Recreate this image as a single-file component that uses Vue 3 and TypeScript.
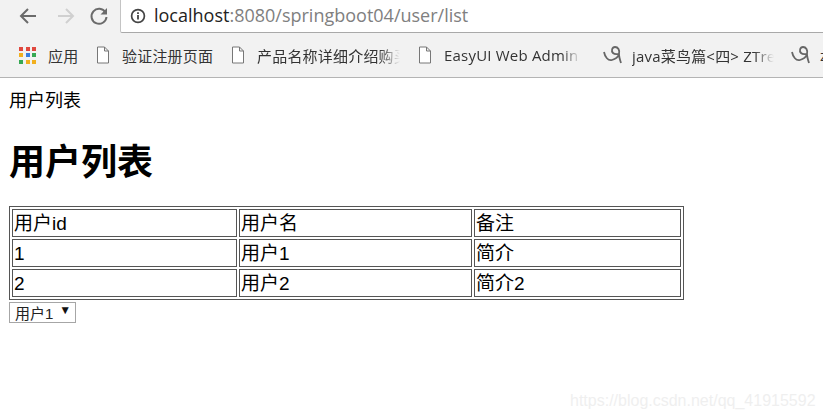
<script setup lang="ts">
interface Bookmark { label: string; icon: 'apps' | 'doc' | 'bird'; width: number; labelWidth?: number }
const bookmarks: Bookmark[] = [
  { label: '应用', icon: 'apps', width: 77 },
  { label: '验证注册页面', icon: 'doc', width: 135 },
  { label: '产品名称详细介绍购买', icon: 'doc', width: 187, labelWidth: 143 },
  { label: 'EasyUI Web Admin', icon: 'doc', width: 185, labelWidth: 137 },
  { label: 'java菜鸟篇<四> ZTree', icon: 'bird', width: 188, labelWidth: 142 },
  { label: 'z', icon: 'bird', width: 40 },
]
const rows: string[][] = [
  ['用户id', '用户名', '备注'],
  ['1', '用户1', '简介'],
  ['2', '用户2', '简介2'],
]
const appColors = ['#e0483e', '#e0483e', '#e0483e', '#f2b01e', '#3a7fe0', '#37a853', '#37a853', '#f2b01e', '#f2b01e']
</script>

<template>
  <div class="page">
    <header class="chrome">
      <div class="toolbar">
        <div class="nav">
          <svg class="nav-icon" viewBox="0 0 20 20"><path d="M18 10H3.500M10 3l-7 7 7 7" fill="none" stroke="#6b6b6b" stroke-width="2"/></svg>
          <svg class="nav-icon" viewBox="0 0 20 20"><path d="M2 10h14.500M10 3l7 7-7 7" fill="none" stroke="#d0d0d0" stroke-width="2"/></svg>
          <svg class="nav-icon" viewBox="0 0 20 20"><path d="M16.500 6.500A7.500 7.500 0 1 0 17.500 11" fill="none" stroke="#6b6b6b" stroke-width="2"/><path d="M18 2v6.500h-6.500z" fill="#6b6b6b"/></svg>
        </div>
        <div class="address">
          <svg class="info" viewBox="0 0 16 16"><circle cx="8" cy="8" r="6.400" fill="none" stroke="#444" stroke-width="1.700"/><path d="M8 7v4.500M8 4.300v1.600" stroke="#444" stroke-width="1.800"/></svg>
          <span class="url"><span class="host">localhost</span>:8080/springboot04/user/list</span>
        </div>
      </div>
      <nav class="bookmarks">
        <div v-for="b in bookmarks" :key="b.label" class="bookmark" :style="{ width: b.width + 'px' }">
          <span v-if="b.icon === 'apps'" class="apps">
            <i v-for="(c, i) in appColors" :key="i" :style="{ background: c }"></i>
          </span>
          <svg v-else-if="b.icon === 'doc'" class="bm-icon" viewBox="0 0 14 18"><path d="M1.500 1h7l4 4v12h-11zM8.500 1v4h4" fill="#fff" stroke="#777" stroke-width="1"/></svg>
          <svg v-else class="bm-icon bird" viewBox="0 0 20 18"><path d="M1 6c1 5 4 9 8 8 4-1 6-3 7-6M16 8c1-4-1-7-4-7s-4 4-2 6 4 1 6 1c0 3 1 6 2 9" fill="none" stroke="#666" stroke-width="1.800"/></svg>
          <span
            class="bm-label"
            :class="{ fade: b.labelWidth }"
            :style="b.labelWidth ? { width: b.labelWidth + 'px', flex: 'none' } : undefined"
          >{{ b.label }}</span>
        </div>
      </nav>
    </header>
    <main class="content">
      <p class="crumb">用户列表</p>
      <h1 class="title">用户列表</h1>
      <table class="users">
        <tbody>
          <tr v-for="row in rows" :key="row[0]">
            <td class="c1">{{ row[0] }}</td>
            <td class="c2">{{ row[1] }}</td>
            <td class="c3">{{ row[2] }}</td>
          </tr>
        </tbody>
      </table>
      <div class="select"><span>用户1</span><span class="arrow">▼</span></div>
    </main>
    <div class="watermark">https://blog.csdn.net/qq_41915592</div>
  </div>
</template>

<style scoped>
.page {
  width: 823px;
  height: 420px;
  position: relative;
  overflow: hidden;
  background: #fff;
  color: #000;
  font-family: "Open Sans", "Noto Sans CJK SC", sans-serif;
}
.chrome {
  background: #f2f2f2;
  border-bottom: 1px solid #b4b4b4;
  height: 77px;
  box-sizing: content-box;
}
.toolbar {
  display: flex;
  height: 33px;
}
.nav {
  width: 120px;
  flex: none;
  display: grid;
  grid-template-columns: 38px 33px 20px;
  align-items: center;
  padding-left: 18px;
  padding-bottom: 1px;
  box-sizing: border-box;
}
.nav-icon {
  width: 20px;
  height: 20px;
  flex: none;
}
.address {
  flex: 1;
  background: #fff;
  border-left: 1px solid #c4c4c4;
  border-bottom: 1px solid #a9a9a9;
  border-bottom-left-radius: 2px;
  display: flex;
  align-items: center;
  padding-left: 9px;
  gap: 8px;
}
.info {
  width: 16px;
  height: 16px;
  flex: none;
}
.url {
  font-family: "Open Sans", sans-serif;
  font-size: 18px;
  color: #808080;
  white-space: nowrap;
  padding-bottom: 2px;
}
.host { color: #222; }
.bookmarks {
  display: flex;
  height: 44px;
  align-items: center;
  padding-left: 19px;
}
.bookmark {
  display: flex;
  align-items: center;
  flex: none;
  overflow: hidden;
  white-space: nowrap;
  font-size: 15px;
  letter-spacing: 0.2px;
  color: #333;
}
.apps {
  display: grid;
  grid-template-columns: repeat(3, 4px);
  gap: 2.500px;
  width: 17px;
  margin-right: 12px;
  flex: none;
}
.apps i { width: 4px; height: 4px; display: block; }
.bm-icon {
  width: 14px;
  height: 18px;
  margin-right: 12px;
  flex: none;
}
.bm-icon.bird {
  width: 20px;
  margin-right: 9px;
}
.bm-label {
  display: block;
  overflow: hidden;
  flex: 1;
}
.bm-label.fade {
  -webkit-mask-image: linear-gradient(to right, #000 86%, transparent 100%);
  mask-image: linear-gradient(to right, #000 86%, transparent 100%);
}
.content {
  padding: 0 9px;
  font-family: "Liberation Sans", "Noto Sans CJK SC", sans-serif;
}
.crumb {
  margin: 0;
  padding-top: 13px;
  font-size: 18px;
  line-height: 21px;
}
.title {
  margin: 30px 0 0;
  font-size: 36px;
  line-height: 42px;
  font-weight: 700;
}
.users {
  margin-top: 22px;
  width: 675px;
  border-collapse: separate;
  border-spacing: 2px;
  border: 1px solid #555;
  table-layout: fixed;
  font-size: 19px;
}
.users td {
  border: 1px solid #555;
  padding: 2px 1px 0;
  height: 28px;
  line-height: 24px;
  box-sizing: border-box;
  overflow: hidden;
  white-space: nowrap;
}
.c1 { width: 225px; }
.c2 { width: 233px; }
.select {
  width: 67px;
  height: 21px;
  margin-top: 2px;
  box-sizing: border-box;
  border: 1px solid #a6a6a6;
  display: flex;
  align-items: center;
  font-size: 15px;
  padding-left: 5px;
  color: #222;
  gap: 6px;
  white-space: nowrap;
}
.arrow {
  font-size: 12px;
  margin-bottom: 5px;
  color: #111;
}
.watermark {
  position: absolute;
  left: 570px;
  top: 392px;
  font-family: "Liberation Sans", sans-serif;
  font-size: 16px;
  color: #efefef;
  white-space: nowrap;
}
</style>
